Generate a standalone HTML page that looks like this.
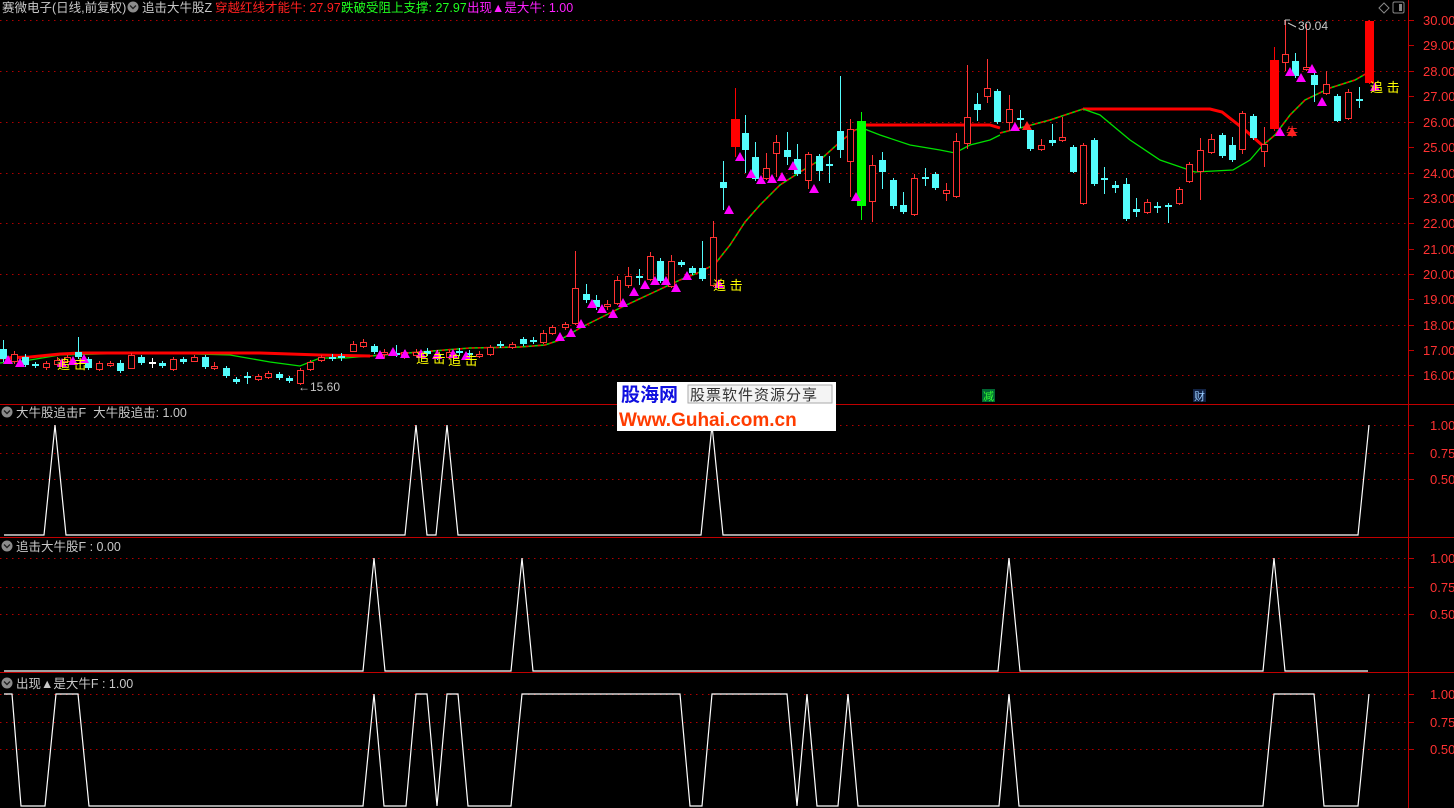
<!DOCTYPE html>
<html><head><meta charset="utf-8">
<style>
html,body{margin:0;padding:0;background:#000;width:1454px;height:808px;overflow:hidden}
svg{display:block}
text{font-family:"Liberation Sans","Noto Sans CJK SC",sans-serif}
</style></head>
<body>
<svg id="s" width="1454" height="808" xmlns="http://www.w3.org/2000/svg">
<rect width="1454" height="808" fill="#000"/>
<g id="grid"></g>
<g id="lines"></g>
<g id="candles"></g>
<g id="marks"></g>
<!-- separators & axis -->
<line x1="0" y1="404.5" x2="1454" y2="404.5" stroke="#c00000" stroke-width="1"/>
<line x1="0" y1="537.5" x2="1454" y2="537.5" stroke="#c00000" stroke-width="1"/>
<line x1="0" y1="672.5" x2="1454" y2="672.5" stroke="#c00000" stroke-width="1"/>
<line x1="1408.5" y1="0" x2="1408.5" y2="808" stroke="#c00000" stroke-width="1"/>
<g id="axis" fill="#ff3232" font-size="13"></g>
<!-- header -->
<text x="2" y="12" font-size="12.5" fill="#c8c8c8">赛微电子(日线,前复权)</text>
<circle cx="133" cy="7" r="5.5" fill="#8c8c8c"/><path d="M130 5.5 L133 8.5 L136 5.5" stroke="#222" stroke-width="1.4" fill="none"/>
<text x="142" y="12" font-size="12.5" fill="#c8c8c8">追击大牛股Z</text>
<text x="215" y="12" font-size="12.5" fill="#ff2020">穿越红线才能牛: 27.97</text>
<text x="341" y="12" font-size="12.5" fill="#20ff20">跌破受阻上支撑: 27.97</text>
<text x="467" y="12" font-size="12.5" fill="#ff20ff">出现▲是大牛: 1.00</text>
<path d="M1379 8 L1384 3 L1389 8 L1384 13 Z" stroke="#888" fill="none"/>
<rect x="1393" y="2" width="11" height="11" rx="1.5" stroke="#888" fill="none"/><rect x="1399" y="4" width="3" height="7" fill="#888"/>
<!-- panel labels -->
<circle cx="7" cy="412" r="5.5" fill="#8c8c8c"/><path d="M4 410.5 L7 413.5 L10 410.5" stroke="#222" stroke-width="1.4" fill="none"/>
<text x="16" y="417" font-size="12.5" fill="#c8c8c8">大牛股追击F&#160;&#160;大牛股追击: 1.00</text>
<circle cx="7" cy="546" r="5.5" fill="#8c8c8c"/><path d="M4 544.5 L7 547.5 L10 544.5" stroke="#222" stroke-width="1.4" fill="none"/>
<text x="16" y="551" font-size="12.5" fill="#c8c8c8">追击大牛股F : 0.00</text>
<circle cx="7" cy="683" r="5.5" fill="#8c8c8c"/><path d="M4 681.5 L7 684.5 L10 681.5" stroke="#222" stroke-width="1.4" fill="none"/>
<text x="16" y="688" font-size="12.5" fill="#c8c8c8">出现▲是大牛F : 1.00</text>
<!-- misc -->
<text x="298" y="391" font-size="12" fill="#c8c8c8">←15.60</text>
<path d="M1285 20 L1290 20 M1285 20 L1285 25 M1288 23 L1296 27" stroke="#c8c8c8" fill="none"/>
<text x="1298" y="30" font-size="12" fill="#c8c8c8">30.04</text>
<rect x="982" y="389" width="13" height="13" fill="#063"/><text x="983" y="400" font-size="11" fill="#3f3">减</text>
<rect x="1193" y="389" width="13" height="13" fill="#124"/><text x="1194" y="400" font-size="11" fill="#9cf">财</text>
<!-- watermark -->
<rect x="617" y="382" width="219" height="49" fill="#fff"/>
<text x="621" y="401" font-size="19" font-weight="bold" fill="#1010e0" font-family="Liberation Sans,'Noto Sans CJK SC',sans-serif">股海网</text>
<rect x="688" y="385" width="144" height="18" fill="#f4f4f4" stroke="#aaa"/>
<text x="690" y="400" font-size="15" fill="#333" letter-spacing="1" font-family="'Noto Serif CJK SC',serif">股票软件资源分享</text>
<text x="619" y="426" font-size="19" font-weight="bold" fill="#ff3c00">Www.Guhai.com.cn</text>
</svg>
<script>
var NS="http://www.w3.org/2000/svg";
function el(p,t,a){var e=document.createElementNS(NS,t);for(var k in a)e.setAttribute(k,a[k]);p.appendChild(e);return e;}
var G=document.getElementById('grid'),L=document.getElementById('lines'),C=document.getElementById('candles'),M=document.getElementById('marks'),A=document.getElementById('axis');
// grid + axis
var py=[[20,'30.00'],[45,'29.00'],[71,'28.00'],[96,'27.00'],[122,'26.00'],[147,'25.00'],[173,'24.00'],[198,'23.00'],[223,'22.00'],[249,'21.00'],[274,'20.00'],[299,'19.00'],[325,'18.00'],[350,'17.00'],[375,'16.00']];
py.forEach(function(p,i){
 if(i%2==0) el(G,'line',{x1:0,y1:p[0]+.5,x2:1408,y2:p[0]+.5,stroke:'#b00000','stroke-dasharray':'1.5,4.5'});
 el(A,'line',{x1:1408,y1:p[0]+.5,x2:1414,y2:p[0]+.5,stroke:'#c00000'});
 var t=el(A,'text',{x:1423,y:p[0]+5});t.textContent=p[1];
});
[[425,453,479],[558,587,614],[694,722,749]].forEach(function(a){
 ['1.00','0.75','0.50'].forEach(function(s,i){
  el(G,'line',{x1:0,y1:a[i]+.5,x2:1408,y2:a[i]+.5,stroke:'#b00000','stroke-dasharray':'1.5,4.5'});
  el(A,'line',{x1:1408,y1:a[i]+.5,x2:1414,y2:a[i]+.5,stroke:'#c00000'});
  var t=el(A,'text',{x:1430,y:a[i]+5});t.textContent=s;});
});
// candles [x,top,bottom,high,low,type]
var D=[[3,349,359,340,362,'c'],[14,354,361,351,364,'r'],[25,357,365,354,367,'c'],[35,364,366,362,368,'c'],[46,363,367,361,370,'r'],[57,360,364,357,366,'r'],[67,357,361,355,363,'r'],[78,352,357,337,359,'c'],[88,359,368,357,370,'c'],[99,363,369,361,371,'r'],[110,363,365,361,367,'r'],[120,363,371,360,373,'c'],[131,355,368,353,369,'r'],[141,357,363,355,365,'c'],[152,362,364,358,368,'w'],[162,363,366,361,368,'c'],[173,359,369,357,371,'r'],[183,359,362,357,364,'c'],[194,357,361,355,362,'r'],[205,357,367,355,369,'c'],[214,366,368,362,370,'r'],[226,368,376,366,378,'c'],[236,379,382,377,384,'c'],[247,376,378,372,384,'c'],[258,376,379,374,381,'r'],[268,373,377,371,379,'r'],[279,374,378,372,380,'c'],[289,378,381,376,383,'c'],[300,370,383,368,385,'r'],[310,362,369,360,371,'r'],[321,357,360,355,362,'r'],[332,357,359,354,361,'c'],[341,356,358,353,361,'c'],[353,344,351,341,352,'r'],[363,342,346,339,348,'r'],[374,346,352,344,354,'c'],[384,352,354,349,358,'r'],[396,353,355,345,357,'c'],[404,352,356,350,359,'r'],[416,352,355,349,357,'r'],[427,351,354,348,356,'c'],[437,355,356,350,360,'c'],[449,352,357,350,359,'r'],[459,351,353,348,356,'c'],[469,353,355,350,358,'c'],[479,354,355,351,358,'r'],[490,347,354,345,356,'r'],[500,344,346,341,348,'c'],[512,344,347,342,349,'r'],[523,339,344,337,346,'c'],[533,340,341,337,344,'c'],[543,333,342,330,344,'r'],[552,327,333,325,335,'r'],[565,324,327,322,330,'r'],[575,288,323,251,325,'r'],[586,294,300,284,303,'c'],[596,300,307,295,310,'c'],[607,304,306,300,310,'r'],[617,280,303,276,305,'r'],[628,276,285,267,288,'r'],[639,276,278,269,285,'c'],[650,256,279,252,281,'r'],[660,261,281,258,283,'c'],[671,261,286,255,288,'r'],[681,262,265,260,267,'c'],[692,268,273,266,275,'c'],[702,268,279,241,281,'c'],[713,237,285,221,287,'r'],[723,182,188,161,210,'c'],[735,119,147,88,157,'R'],[745,133,150,115,173,'c'],[755,157,179,142,181,'c'],[766,168,178,153,180,'r'],[776,142,153,135,177,'r'],[787,150,157,132,165,'c'],[797,159,174,144,176,'c'],[808,154,180,152,189,'r'],[819,156,171,154,181,'c'],[829,164,166,156,183,'c'],[840,131,150,76,158,'c'],[850,129,161,119,197,'r'],[861,121,206,112,220,'g'],[872,165,201,155,222,'r'],[882,160,172,152,189,'c'],[893,180,206,178,209,'c'],[903,205,212,192,214,'c'],[914,178,214,174,216,'r'],[925,177,179,168,186,'c'],[935,174,188,172,190,'c'],[946,190,193,183,201,'r'],[956,141,196,133,198,'r'],[967,117,143,65,149,'r'],[977,104,110,93,121,'c'],[987,88,96,59,103,'r'],[997,91,122,89,124,'c'],[1009,109,122,95,131,'r'],[1020,118,120,110,128,'c'],[1030,130,149,128,151,'c'],[1041,145,149,139,151,'r'],[1052,140,143,124,146,'c'],[1062,137,140,117,142,'r'],[1073,147,172,145,173,'c'],[1083,145,203,143,205,'r'],[1094,140,184,138,186,'c'],[1104,178,180,167,194,'c'],[1115,185,188,181,193,'c'],[1126,184,219,178,221,'c'],[1136,209,212,198,217,'c'],[1147,202,212,199,214,'r'],[1157,206,208,202,213,'c'],[1168,205,207,203,223,'c'],[1179,189,203,187,205,'r'],[1189,164,181,162,183,'r'],[1200,150,171,138,200,'r'],[1211,139,152,134,154,'r'],[1222,135,156,133,158,'c'],[1232,145,160,137,162,'c'],[1242,113,149,111,154,'r'],[1253,116,138,114,140,'c'],[1264,144,151,127,167,'r'],[1274,60,129,47,131,'R'],[1285,54,62,20,71,'r'],[1295,61,76,53,78,'c'],[1306,67,69,24,71,'r'],[1314,75,85,73,102,'c'],[1326,84,93,71,95,'r'],[1337,96,121,94,122,'c'],[1348,92,118,89,120,'r'],[1359,99,101,87,108,'c'],[1369,21,83,20,84,'R']];
var col={r:'#ff3232',R:'#ff0000',c:'#54fcfc',g:'#00ff00',w:'#ffffff'};
D.forEach(function(d){
 var x=d[0],t=d[1],b=d[2],h=d[3],l=d[4],k=d[5],c=col[k];
 var w=(k=='R'||k=='g')?9:7;
 if(b-t<2){b=t+2;}
 el(C,'line',{x1:x+.5,y1:h,x2:x+.5,y2:l,stroke:c});
 if(k=='r') el(C,'rect',{x:x-w/2+1,y:t+.5,width:w-1,height:b-t,fill:'#000',stroke:c});
 else el(C,'rect',{x:x-w/2+.5,y:t,width:w,height:b-t,fill:c});
});
// lines
function pl(pts,c,w,dash){return el(L,'polyline',{points:pts.map(function(p){return p.join(',')}).join(' '),fill:'none',stroke:c,'stroke-width':w,'stroke-dasharray':dash||'none'});}
var green=[[0,363],[30,360],[60,355],[100,354],[160,353],[230,355],[270,362],[300,366],[320,358],[345,358],[370,356]];
pl(green,'#00e000',1.3);
var red=[[0,358],[30,357],[60,354],[80,353],[260,353],[320,355],[370,356]];
pl(red,'#ff0000',3);
var up=[[370,356],[420,352],[470,348],[520,347],[545,345],[560,340],[580,328],[600,318],[620,308],[650,294],[680,280],[700,272],[715,264],[730,245],[745,222],[760,205],[780,185],[800,172],[820,160],[840,142],[855,130],[862,128]];
pl(up,'#00e000',1.5);pl(up,'#ff0000',1.5,'3,3');
pl([[862,125],[990,125],[1000,128]],'#ff0000',3);
var g2=[[862,128],[880,135],[910,145],[940,150],[955,153],[970,145],[990,140],[1000,135]];
pl(g2,'#00e000',1.3);
var up2=[[1000,133],[1020,128],[1050,120],[1083,109]];
pl(up2,'#00e000',1.5);pl(up2,'#ff0000',1.5,'3,3');
pl([[1083,109],[1210,109],[1222,112],[1245,130],[1262,145]],'#ff0000',3);
var g3=[[1083,109],[1100,115],[1130,140],[1160,160],[1195,172],[1233,170],[1250,160],[1262,146]];
pl(g3,'#00e000',1.3);
var up3=[[1262,146],[1275,135],[1290,115],[1305,100],[1330,88],[1355,80],[1369,72]];
pl(up3,'#00e000',1.5);pl(up3,'#ff0000',1.5,'3,3');
// triangles
function tri(x,y,c){el(M,'path',{d:'M'+(x-5)+' '+(y+4)+' L'+x+' '+(y-5)+' L'+(x+5)+' '+(y+4)+' Z',fill:c||'#ff00ff'});}
[[8,360],[20,363],[62,363],[73,361],[84,359],[380,355],[393,352],[405,354],[421,354],[437,355],[453,354],[466,356],[560,337],[571,333],[581,324],[592,304],[602,309],[613,314],[623,303],[634,292],[645,285],[655,281],[666,281],[676,288],[687,276],[719,284],[729,210],[740,157],[751,174],[761,180],[772,179],[782,177],[793,166],[814,189],[856,197],[1015,127],[1280,132],[1290,72],[1301,78],[1312,69],[1322,102],[1375,87]].forEach(function(p){tri(p[0],p[1]);});
tri(1027,126,'#ff2020');tri(1292,132,'#ff2020');
// 追击 labels
[[57,369],[416,363],[448,365],[713,290],[1370,92]].forEach(function(p){
 var t=el(M,'text',{x:p[0],y:p[1],'font-size':13,fill:'#ffff00'});t.textContent='追 击';});
var t=el(M,'text',{x:1286,y:136,'font-size':12,fill:'#ff2020'});t.textContent='牛';
// indicator panels
function ip(base,top,segs){var pts=[];segs.forEach(function(s){pts.push([s[0],s[1]?top:base]);});
 el(L,'polyline',{points:pts.map(function(p){return p.join(',')}).join(' '),fill:'none',stroke:'#fff','stroke-width':1.2});}
function spikes(base,top,start,end,peaks){var s=[[start,0]];peaks.forEach(function(p){s.push([p-11,0],[p,1],[p+11,0]);});if(end)s.push([end,0]);return s;}
ip(535,425,spikes(535,425,4,0,[55,416,447,712]).concat([[1358,0],[1369,1]]));
ip(671,558,spikes(671,558,4,1368,[374,522,1009,1274]));
ip(806,694,[[4,1],[12,1],[21,0],[45,0],[56,1],[78,1],[89,0],[363,0],[374,1],[384,0],[406,0],[416,1],[427,1],[437,0],[447,1],[458,1],[468,0],[511,0],[522,1],[680,1],[690,0],[702,0],[712,1],[787,1],[797,0],[807,1],[817,0],[838,0],[848,1],[858,0],[999,0],[1009,1],[1019,0],[1263,0],[1274,1],[1314,1],[1324,0],[1358,0],[1369,1]]);
</script>
</body></html>
